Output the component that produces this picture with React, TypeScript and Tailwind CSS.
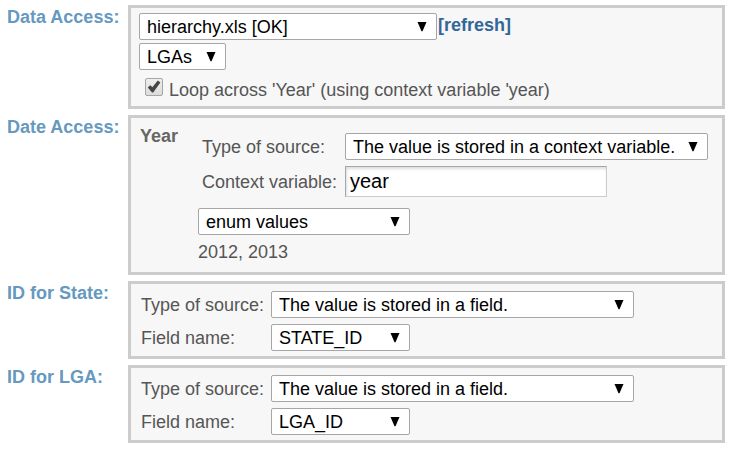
import { useId, type ReactNode } from "react";

type PickerProps = {
  id?: string;
  label?: string;
  width: string;
  options: string[];
};

function Picker({ id, label, width, options }: PickerProps) {
  return (
    <span className={`relative block ${width}`}>
      <select
        id={id}
        aria-label={label}
        className="block h-[27px] w-full appearance-none rounded-xs border border-[#a6a6a6] bg-white pr-7 pl-[7px] text-[18px] leading-6 text-black"
      >
        {options.map((option) => (
          <option key={option}>{option}</option>
        ))}
      </select>
      <svg
        viewBox="0 0 10 10"
        aria-hidden="true"
        className="pointer-events-none absolute top-[9px] right-2.5 size-2.5"
      >
        <path d="M0.5 0H9.5L5.5 9.2H4.5Z" fill="#000" />
      </svg>
    </span>
  );
}

function Section({ title, children }: { title: string; children: ReactNode }) {
  return (
    <section className="flex">
      <h2 className="w-[121px] shrink-0 text-[18px] leading-6 font-bold text-[#6699bf]">
        {title}
      </h2>
      <div className="min-w-0 grow border-3 border-[#cccccc] bg-[#f7f7f7]">
        {children}
      </div>
    </section>
  );
}

function FieldSource({ field }: { field: string }) {
  const id = useId();
  return (
    <div className="grid grid-cols-[130px_1fr] items-center gap-y-1.5 pt-[7px] pb-[5px] pl-2.5">
      <label htmlFor={`${id}-type`}>Type of source:</label>
      <Picker
        id={`${id}-type`}
        width="w-[363px]"
        options={["The value is stored in a field."]}
      />
      <label htmlFor={`${id}-name`}>Field name:</label>
      <Picker id={`${id}-name`} width="w-[139px]" options={[field]} />
    </div>
  );
}

export default function App() {
  return (
    <main className="flex flex-col gap-1.5 bg-white px-[7px] py-[5px] font-['Liberation_Sans',Arial,sans-serif] text-[18px] leading-6 text-[#555555]">
      <Section title="Data Access:">
        <div className="flex flex-col gap-[3px] pt-[5px] pb-[3px] pl-2">
          <div className="flex">
            <Picker
              label="Data source"
              width="w-[298px]"
              options={["hierarchy.xls [OK]"]}
            />
            <a href="#refresh" className="pl-px leading-6 font-bold text-[#336699]">
              [refresh]
            </a>
          </div>
          <Picker label="Sheet" width="w-[87px]" options={["LGAs"]} />
          <label className="flex items-start gap-1.5 pt-[5px] pb-px pl-1.5">
            <span className="relative block size-[18px]">
              <input
                type="checkbox"
                defaultChecked
                className="peer block size-[18px] appearance-none rounded-xs border border-[#a6a6a6] bg-linear-to-b from-[#eeeeee] to-[#dcdcdc]"
              />
              <svg
                viewBox="0 0 18 18"
                aria-hidden="true"
                className="pointer-events-none absolute inset-0 hidden size-[18px] peer-checked:block"
              >
                <path
                  d="M2.8 9.4L5.2 7.2L7.4 9.2L12.8 2.6L15.4 4.6L8.2 14.4H7Z"
                  fill="#444"
                />
              </svg>
            </span>
            <span>Loop across 'Year' (using context variable 'year)</span>
          </label>
        </div>
      </Section>

      <Section title="Date Access:">
        <div className="flex pl-[9px]">
          <h3 className="w-[58px] shrink-0 pt-1.5 font-bold text-[#666666]">Year</h3>
          <div className="pt-[15px] pb-2">
            <div className="grid grid-cols-[143px_1fr] items-center gap-y-1.5 pl-1">
              <label htmlFor="year-type">Type of source:</label>
              <Picker
                id="year-type"
                width="w-[363px]"
                options={["The value is stored in a context variable."]}
              />
              <label htmlFor="year-variable">Context variable:</label>
              <input
                id="year-variable"
                type="text"
                defaultValue="year"
                className="h-[31px] w-[262px] border border-[#cccccc] border-t-[#a0a8b0] border-l-[#a0a8b0] bg-white pl-1 text-[20px] leading-7 text-black inset-shadow-[1px_2px_3px_#dddddd]"
              />
            </div>
            <div className="pt-[11px] pb-[5px]">
              <Picker label="Year values" width="w-[212px]" options={["enum values"]} />
            </div>
            <p>2012, 2013</p>
          </div>
        </div>
      </Section>

      <Section title="ID for State:">
        <FieldSource field="STATE_ID" />
      </Section>

      <Section title="ID for LGA:">
        <FieldSource field="LGA_ID" />
      </Section>
    </main>
  );
}
